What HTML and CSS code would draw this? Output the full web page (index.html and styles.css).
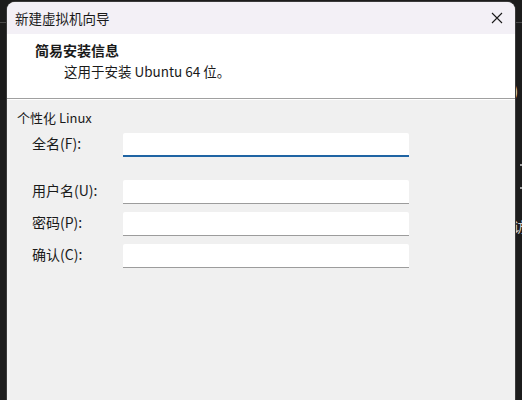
FILE: index.html
```html
<!DOCTYPE html>
<html lang="zh-CN">
<head>
<meta charset="utf-8">
<title>新建虚拟机向导</title>
<link rel="stylesheet" href="styles.css">
</head>
<body>
<div class="desktop">
  <div class="bg-line"></div>
  <span class="bg-frag bg-paren">)</span>
  <span class="bg-dot bg-dot1"></span>
  <span class="bg-dot bg-dot2"></span>
  <span class="bg-frag bg-char">访</span>
  <div class="window">
    <div class="titlebar">
      <span class="title">新建虚拟机向导</span>
      <svg class="close" width="12" height="12" viewBox="0 0 12 12">
        <path d="M1 1 L11 11 M11 1 L1 11" stroke="#1a1a1a" stroke-width="1.1" fill="none"/>
      </svg>
    </div>
    <div class="header">
      <div class="h-title">简易安装信息</div>
      <div class="h-sub">这用于安装 Ubuntu 64 位。</div>
    </div>
    <div class="content">
      <div class="group">个性化 Linux</div>
      <div class="form">
        <div class="row r1">
          <label class="lbl">全名(F):</label>
          <div class="input focused"></div>
        </div>
        <div class="row r2">
          <label class="lbl">用户名(U):</label>
          <div class="input"></div>
        </div>
        <div class="row r3">
          <label class="lbl">密码(P):</label>
          <div class="input"></div>
        </div>
        <div class="row r4">
          <label class="lbl">确认(C):</label>
          <div class="input"></div>
        </div>
      </div>
    </div>
  </div>
</div>
</body>
</html>
```
FILE: styles.css
```css
html, body {
  margin: 0;
  padding: 0;
  width: 522px;
  height: 400px;
  overflow: hidden;
  background: #1c1c1c;
}
.desktop {
  position: relative;
  width: 522px;
  height: 400px;
  overflow: hidden;
  font-family: "Noto Sans CJK SC", "Noto Sans", sans-serif;
  color: #1a1a1a;
}
.bg-line {
  position: absolute;
  left: 0;
  top: 22px;
  width: 522px;
  height: 1px;
  background: #4a4a4a;
}
.bg-frag {
  position: absolute;
  color: #d0d0d0;
  font-size: 14px;
  line-height: 16px;
}
.bg-paren { left: 513px; top: 81px; font-size: 16px; line-height: 18px; }
.bg-char { left: 513px; top: 218px; }
.bg-dot {
  position: absolute;
  width: 2px;
  height: 2px;
  background: #cfcfcf;
  border-radius: 1px;
}
.bg-dot1 { left: 520px; top: 164px; }
.bg-dot2 { left: 520px; top: 187px; }

.window {
  position: absolute;
  left: 7px;
  top: 2px;
  width: 508px;
  height: 410px;
  background: #f0f0f0;
  border-radius: 8px 8px 0 0;
  overflow: hidden;
  display: flex;
  flex-direction: column;
  box-shadow: 0 0 0 1px #3a3a3a;
}
.titlebar {
  height: 32px;
  background: #f3f0f6;
  display: flex;
  align-items: center;
  justify-content: space-between;
  padding: 0 12px 0 8px;
  flex: none;
}
.title {
  font-size: 13.5px;
  line-height: 18px;
  margin-top: -1px;
}
.close {
  display: block;
}
.header {
  background: #ffffff;
  border-bottom: 1px solid #a0a0a0;
  box-shadow: 0 1px 0 #ffffff;
  padding: 7px 0 0 28px;
  box-sizing: border-box;
  height: 65px;
  flex: none;
}
.h-title {
  font-size: 14px;
  font-weight: 700;
  line-height: 18px;
}
.h-sub {
  font-size: 13.5px;
  line-height: 18px;
  margin-top: 3px;
  padding-left: 29px;
}
.content {
  padding: 10px 0 0 10px;
}
.group {
  font-size: 13px;
  line-height: 18px;
}
.form {
  display: flex;
  flex-direction: column;
  padding-left: 15px;
  margin-top: 6px;
}
.row {
  display: flex;
  height: 24px;
}
.r2 { margin-top: 23px; }
.r3, .r4 { margin-top: 8px; }
.lbl {
  width: 91px;
  font-size: 14px;
  line-height: 20px;
}
.input {
  width: 286px;
  height: 24px;
  box-sizing: border-box;
  background: #ffffff;
  border-bottom: 1px solid #9c9c9c;
  border-radius: 2px 2px 0 0;
}
.input.focused {
  border-bottom: 2px solid #1f64a3;
}
```
